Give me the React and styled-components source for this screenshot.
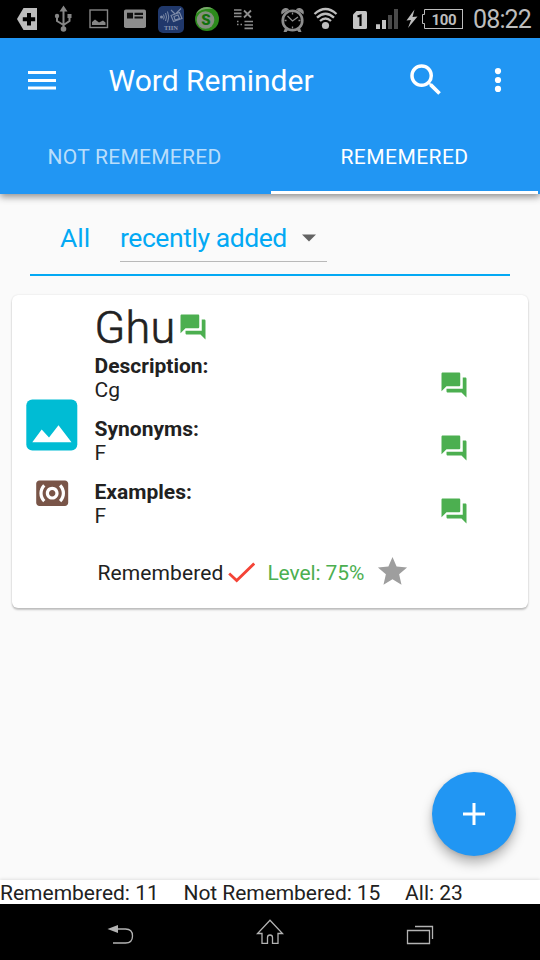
import React from 'react';
import styled, { createGlobalStyle } from 'styled-components';
import { MdQuestionAnswer, MdSearch, MdStar, MdSurroundSound } from 'react-icons/md';

const GlobalStyle = createGlobalStyle`
  *, *::before, *::after { box-sizing: border-box; }
  body { margin: 0; background: #fafafa; font-family: Roboto, sans-serif; color: #212121; }
  svg { display: block; flex: none; }
`;

const Screen = styled.div`
  position: relative;
  display: flex;
  flex-direction: column;
  width: 540px;
  height: 960px;
  overflow: hidden;
  background: #fafafa;
`;

const Label = styled.span`
  white-space: nowrap;
  font-size: ${(p) => p.$size || 21}px;
  font-weight: ${(p) => p.$weight || 400};
  letter-spacing: ${(p) => p.$track || 0}px;
  color: ${(p) => p.$color || 'inherit'};
`;

/* Status bar */
const StatusBar = styled.header`
  display: flex;
  align-items: center;
  flex: none;
  height: 38px;
  background: #000;
  color: #bdbdbd;
`;

const Battery = styled.div`
  display: grid;
  place-items: center;
  width: 38px;
  height: 20px;
  margin-right: 10px;
  padding: 1px 0 0 1px;
  border: 1px solid #bdbdbd;
  border-left: 0;
  line-height: 18px;
`;

const Clock = styled(Label)`
  padding-top: 1px;
`;

const StatusGlyph = ({ x, w, children }) => (
  <svg width={w} height="38" viewBox={`${x} 0 ${w} 38`} fill="none">
    {children}
  </svg>
);

function StatusIcons() {
  return (
    <>
      <StatusGlyph x={0} w={46}>
        <path d="M17 19 23.500 8H37V30H23.500Z" fill="#bdbdbd" />
        <path d="M29 13V25.500M22.800 19.300H35.200" stroke="#000" strokeWidth="4" />
      </StatusGlyph>
      <StatusGlyph x={46} w={34}>
        <path d="M63.500 9V30M57 16V21L63.500 25M69.500 15V21L63.500 25" stroke="#858585" strokeWidth="2" />
        <path d="M63.500 5.500 59.500 11.500H67.500ZM67.500 14H71.500V18H67.500Z" fill="#858585" />
        <circle cx="57" cy="16" r="2.200" fill="#858585" />
        <circle cx="63.500" cy="29" r="2.800" fill="#858585" />
      </StatusGlyph>
      <StatusGlyph x={80} w={36}>
        <rect x="90" y="10" width="17.500" height="17.500" stroke="#858585" strokeWidth="1.400" />
        <path d="M92 25V22L95 19.500 99 22.500 103 20.500 105.500 22.500V25Z" fill="#858585" />
      </StatusGlyph>
      <StatusGlyph x={116} w={36}>
        <rect x="124" y="9.500" width="22" height="18.500" rx="1.800" fill="#8d8d8d" />
        <path d="M127 12.800H133V18.500H127ZM134.500 12.800H143V15H134.500ZM134.500 16.500H143V18.500H134.500Z" fill="#111" />
      </StatusGlyph>
      <StatusGlyph x={152} w={36}>
        <rect x="158" y="6" width="26" height="27" rx="5" fill="#20386b" />
        <g stroke="#7d8ba8" strokeWidth="1">
          <circle cx="161.500" cy="17" r="1.500" fill="#7d8ba8" stroke="none" />
          <path d="M163.500 14.500Q165 17 163.500 19.500M165.500 13Q167.500 17 165.500 21M167.500 11.500Q170 17 167.500 22.500" />
          <path d="M171 15.500 179.500 12.500 182 18.500 173.500 21.500ZM174 16.500 178 15 179.500 18.500 175 20ZM175 14 171 10M176 13.500 181 8.500" strokeWidth="1.100" />
        </g>
        <text x="171" y="30.300" textAnchor="middle" fontFamily="Liberation Serif, serif" fontWeight="700" fontSize="6.500" fill="#8a97b0">TIIN</text>
      </StatusGlyph>
      <StatusGlyph x={188} w={38}>
        <circle cx="207" cy="19" r="12" fill="#2c8a1c" />
        <path d="M196 14A12 12 0 0 1 213 8.700Q201 8 196 14Z" fill="#7aa86c" />
        <circle cx="205.500" cy="20" r="8.800" fill="#84907f" />
        <text x="206" y="25" textAnchor="middle" fontFamily="Roboto, sans-serif" fontWeight="900" fontSize="15" fill="#12700c">S</text>
      </StatusGlyph>
      <StatusGlyph x={226} w={46}>
        <path d="M234 10H241.500M234 13.300H241.500M234 16.500H241.500M244.500 21.500H253M244.500 25H253M244.500 28.300H253M237 21.500H238.500M237 24.500H238.500M240.500 24.500H242" stroke="#8d8d8d" strokeWidth="1.700" />
        <path d="M244 10.500 251 17.500M251 10.500 244 17.500" stroke="#8d8d8d" strokeWidth="1.800" />
      </StatusGlyph>
      <StatusGlyph x={272} w={38}>
        <circle cx="292.500" cy="20.500" r="9.800" stroke="#8d8d8d" strokeWidth="2.600" />
        <path d="M281.500 14.500Q280 9.500 285 8Q288 7.500 289 9.500ZM303.500 14.500Q305 9.500 300 8Q297 7.500 296 9.500ZM285 28 283.500 32H286.500L288.500 29.500ZM300 28 301.500 32H298.500L296.500 29.500Z" fill="#8d8d8d" />
        <path d="M287.500 16 292.500 21 298 17M292.500 12.500V14.500M292.500 26.500V28.500M284.500 20.500H286.500M298.500 20.500H300.500" stroke="#8d8d8d" strokeWidth="1.300" />
      </StatusGlyph>
      <StatusGlyph x={310} w={34}>
        <path d="M314.500 14Q325.500 4 336.500 14M317 17.700Q325.500 9.700 334 17.700M320 21Q325.500 16 331 21" stroke="#bdbdbd" strokeWidth="2.300" />
        <circle cx="325.500" cy="25.500" r="3.600" fill="#bdbdbd" />
      </StatusGlyph>
      <StatusGlyph x={344} w={28}>
        <path d="M356.500 11H365.500Q367 11 367 12.500V27.500Q367 29 365.500 29H354.500Q353 29 353 27.500V14.500Z" fill="#c4c4c4" />
        <path d="M357.500 16.500 360.500 15.500V26" stroke="#000" strokeWidth="2.200" />
      </StatusGlyph>
      <StatusGlyph x={372} w={30}>
        <path d="M376 24.200H380V29H376ZM382 20H386V29H382Z" fill="#c4c4c4" />
        <path d="M388 15H392V29H388ZM394 9H398V29H394Z" fill="#4a4a4a" />
      </StatusGlyph>
      <StatusGlyph x={402} w={23}>
        <path d="M414.500 9.500 406.500 20.500 411 20 408 28 417.500 16.500 412.500 17Z" fill="#bdbdbd" />
        <path d="M425 9.500H424.500V14.500H422.500V23.500H424.500V28.500H425" stroke="#bdbdbd" />
      </StatusGlyph>
    </>
  );
}

/* App bar */
const AppBar = styled.div`
  position: relative;
  flex: none;
  height: 156px;
  background: #2196f3;
  color: #fff;
  box-shadow: 0 3px 7px rgba(0, 0, 0, 0.42);
`;

const Toolbar = styled.div`
  display: flex;
  align-items: center;
  height: 84px;
  padding: 0 21px 0 28px;
  line-height: 36px;
`;

const Title = styled.h1`
  flex: 1;
  margin: 1px 0 0 52.500px;
  font-size: 30px;
  font-weight: 400;
`;

const Tabs = styled.nav`
  display: grid;
  grid-template-columns: 271px 267px;
  height: 72px;
`;

const Tab = styled.div`
  display: flex;
  align-items: center;
  justify-content: center;
  padding-right: ${(p) => (p.$active ? 0 : 2)}px;
  border-bottom: 3px solid ${(p) => (p.$active ? '#fff' : 'transparent')};
  color: ${(p) => (p.$active ? '#fff' : 'rgba(255, 255, 255, 0.7)')};
`;

/* Filter */
const Filter = styled.div`
  display: flex;
  flex: none;
  height: 82px;
  margin: 0 30px;
  padding: 21px 0 0 30px;
  border-bottom: 2px solid #03a9f4;
  color: #03a9f4;
  line-height: 46px;
`;

const Dropdown = styled.div`
  display: flex;
  align-items: center;
  justify-content: space-between;
  width: 207px;
  height: 47px;
  margin-left: 30px;
  padding-right: 11px;
  border-bottom: 1px solid #b9b9b9;
`;

const FilterName = styled(Label)`
  width: 30px;
`;

/* Word card */
const Card = styled.article`
  display: grid;
  grid-template-columns: 82.500px 1fr;
  flex: none;
  width: 516px;
  height: 313px;
  margin: 19px 12px 0;
  border-radius: 6px;
  background: #fff;
  box-shadow: 0 2px 2px rgba(0, 0, 0, 0.22), 0 0 2px rgba(0, 0, 0, 0.12);
`;

const Media = styled.div`
  display: flex;
  flex-direction: column;
  align-items: center;
  gap: 23px;
  width: 80px;
  padding-top: 104px;
`;

const Details = styled.div`
  display: flex;
  flex-direction: column;
`;

const WordRow = styled.div`
  display: flex;
  align-items: flex-start;
  height: 59px;
  padding-top: 6px;
  line-height: 54px;
`;

const Word = styled(Label)`
  -webkit-text-stroke: 0.6px currentColor;
`;

const WordIcon = styled.div`
  padding: 11px 0 0 2px;
`;

const Field = styled.section`
  display: flex;
  justify-content: space-between;
  height: 63px;
  padding-right: 59px;
  line-height: 24px;
`;

const FieldText = styled.div`
  display: flex;
  flex-direction: column;
`;

const FieldIcon = styled.div`
  padding-top: 16px;
`;

const Progress = styled.div`
  display: flex;
  align-items: center;
  height: 36px;
  margin-top: 12px;
  padding-left: 3px;
`;

const Check = styled.svg`
  margin: 0 12px 0 5px;
`;

const Star = styled(MdStar)`
  margin: -3px 0 0 11px;
`;

/* Bottom */
const Fab = styled.button`
  position: absolute;
  right: 24px;
  bottom: 104px;
  display: grid;
  place-items: center;
  width: 84px;
  height: 84px;
  padding: 0;
  border: 0;
  border-radius: 50%;
  background: #2196f3;
  box-shadow: 0 7px 12px rgba(0, 0, 0, 0.28), 0 1px 4px rgba(0, 0, 0, 0.12);
`;

const Stats = styled.footer`
  display: flex;
  gap: 24.700px;
  flex: none;
  height: 24px;
  margin-top: auto;
  background: #fff;
  line-height: 26px;
  box-shadow: 0 -1px 3px rgba(0, 0, 0, 0.1);
`;

const SystemNav = styled.nav`
  display: grid;
  grid-template-columns: repeat(3, 150px);
  justify-content: center;
  justify-items: center;
  flex: none;
  height: 56px;
  padding-top: 14px;
  background: #000;
`;

const Chat = () => <MdQuestionAnswer size={30} color="#4caf50" />;

const fields = [
  { name: 'Description:', value: 'Cg' },
  { name: 'Synonyms:', value: 'F' },
  { name: 'Examples:', value: 'F' },
];

export default function App() {
  return (
    <Screen>
      <GlobalStyle />
      <StatusBar>
        <StatusIcons />
        <Battery>
          <Label $size={15} $weight={700} $track={-0.35}>100</Label>
        </Battery>
        <Clock $size={25} $track={-0.85}>08:22</Clock>
      </StatusBar>

      <AppBar>
        <Toolbar>
          <svg width="28" height="20" viewBox="0 0 28 20">
            <path d="M0 2.500H28M0 10.500H28M0 18H28" stroke="#fff" strokeWidth="3" />
          </svg>
          <Title>Word Reminder</Title>
          <MdSearch size={42} />
          <svg width="72" height="24" viewBox="0 0 72 24" fill="#fff">
            <circle cx="51" cy="3.100" r="3.100" />
            <circle cx="51" cy="12" r="3.100" />
            <circle cx="51" cy="20.900" r="3.100" />
          </svg>
        </Toolbar>
        <Tabs>
          <Tab><Label $track={0.27}>NOT REMEMERED</Label></Tab>
          <Tab $active><Label $track={0.45}>REMEMERED</Label></Tab>
        </Tabs>
      </AppBar>

      <Filter>
        <FilterName $size={26.5}>All</FilterName>
        <Dropdown>
          <Label $size={26.5} $track={-0.43}>recently added</Label>
          <svg width="14" height="8" viewBox="0 0 14 8">
            <path d="M0 0.500H14L7 7.500Z" fill="#636363" />
          </svg>
        </Dropdown>
      </Filter>

      <Card>
        <Media>
          <svg width="52" height="52" viewBox="0 0 52 52">
            <rect x="0.300" y="0.500" width="51" height="51" rx="6" fill="#00bcd4" />
            <path d="M6.300 43.200 15.700 30.500 23 38.500 32.500 26.300 45.500 43.200Z" fill="#fff" />
          </svg>
          <MdSurroundSound size={38.4} color="#795548" />
        </Media>
        <Details>
          <WordRow>
            <Word $size={45} $weight={300} $track={0.3}>Ghu</Word>
            <WordIcon><Chat /></WordIcon>
          </WordRow>
          {fields.map((f) => (
            <Field key={f.name}>
              <FieldText>
                <Label $weight={700}>{f.name}</Label>
                <Label>{f.value}</Label>
              </FieldText>
              <FieldIcon><Chat /></FieldIcon>
            </Field>
          ))}
          <Progress>
            <Label $track={0.1}>Remembered</Label>
            <Check width="27" height="22" viewBox="0 0 27 22">
              <path d="M2.200 12.500 8.700 18.500 25.200 2.500" fill="none" stroke="#f44336" strokeWidth="2.800" strokeLinecap="square" />
            </Check>
            <Label $color="#4caf50" $track={-0.1}>Level: 75%</Label>
            <Star size={35} color="#9e9e9e" />
          </Progress>
        </Details>
      </Card>

      <Stats>
        <Label>Remembered: 11</Label>
        <Label $track={-0.05}>Not Remembered: 15</Label>
        <Label>All: 23</Label>
      </Stats>

      <SystemNav>
        <svg width="28" height="28" viewBox="106 918 28 28" fill="none">
          <path d="M113 929H125.500Q132.500 929 132.500 936T125.500 943H113" stroke="#b3b3b3" strokeWidth="1.300" />
          <path d="M107.500 929 118 925V933Z" fill="#b3b3b3" />
        </svg>
        <svg width="28" height="28" viewBox="256 918 28 28" fill="none">
          <path d="M270 920.300 257.500 933.500H262V943.300H267.500V937.500Q267.500 935 270 935T272.500 937.500V943.300H278V933.500H282.500Z" stroke="#b3b3b3" strokeWidth="1.300" />
        </svg>
        <svg width="28" height="28" viewBox="406 918 28 28" fill="none">
          <path d="M407.500 930.500H429.500V943.500H407.500ZM415 926.500H432.500V939" stroke="#b3b3b3" strokeWidth="1.300" />
        </svg>
      </SystemNav>

      <Fab aria-label="Add word">
        <svg width="22" height="22" viewBox="0 0 22 22">
          <path d="M11 0V22M0 11H22" stroke="#fff" strokeWidth="3" />
        </svg>
      </Fab>
    </Screen>
  );
}
